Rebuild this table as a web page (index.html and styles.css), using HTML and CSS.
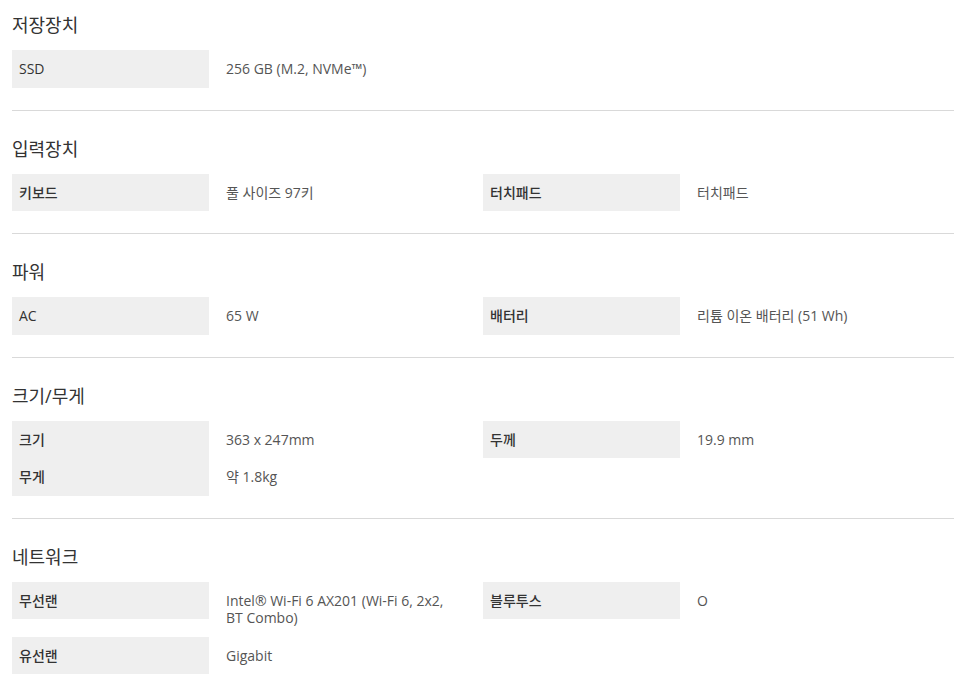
FILE: index.html
```html
<!DOCTYPE html>
<html lang="ko">
<head>
<meta charset="utf-8">
<title>사양</title>
<link rel="stylesheet" href="styles.css">
</head>
<body>
<div class="spec">
  <section class="group first">
    <h3 class="title">저장장치</h3>
    <div class="grid">
      <div class="col">
        <div class="row"><div class="label">SSD</div><div class="value">256 GB (M.2, NVMe™)</div></div>
      </div>
      <div class="col"></div>
    </div>
  </section>
  <section class="group">
    <h3 class="title">입력장치</h3>
    <div class="grid">
      <div class="col">
        <div class="row"><div class="label">키보드</div><div class="value">풀 사이즈 97키</div></div>
      </div>
      <div class="col">
        <div class="row"><div class="label">터치패드</div><div class="value">터치패드</div></div>
      </div>
    </div>
  </section>
  <section class="group">
    <h3 class="title">파워</h3>
    <div class="grid">
      <div class="col">
        <div class="row"><div class="label">AC</div><div class="value">65 W</div></div>
      </div>
      <div class="col">
        <div class="row"><div class="label">배터리</div><div class="value">리튬 이온 배터리 (51 Wh)</div></div>
      </div>
    </div>
  </section>
  <section class="group">
    <h3 class="title">크기/무게</h3>
    <div class="grid">
      <div class="col">
        <div class="row"><div class="label">크기</div><div class="value">363 x 247mm</div></div>
        <div class="row"><div class="label">무게</div><div class="value">약 1.8kg</div></div>
      </div>
      <div class="col">
        <div class="row"><div class="label">두께</div><div class="value">19.9 mm</div></div>
      </div>
    </div>
  </section>
  <section class="group">
    <h3 class="title">네트워크</h3>
    <div class="grid">
      <div class="col">
        <div class="row"><div class="label">무선랜</div><div class="value">Intel® Wi-Fi 6 AX201 (Wi-Fi 6, 2x2, BT Combo)</div></div>
        <div class="row"><div class="label">유선랜</div><div class="value">Gigabit</div></div>
      </div>
      <div class="col">
        <div class="row"><div class="label">블루투스</div><div class="value">O</div></div>
      </div>
    </div>
  </section>
</div>
</body>
</html>
```
FILE: styles.css
```css
html, body {
  margin: 0;
  padding: 0;
  background: #fff;
}
body {
  font-family: "Open Sans", "Noto Sans CJK KR", sans-serif;
  color: #333;
}
.spec {
  padding: 0 12px;
  width: 942px;
}
.group {
  padding: 23px 0 22px;
  border-bottom: 1px solid #d9d9d9;
}
.group.first {
  padding-top: 10px;
}
.title {
  margin: 0 0 10px;
  font-size: 18px;
  line-height: 30px;
  font-weight: 400;
  color: #333;
}
.grid {
  display: grid;
  grid-template-columns: 471px 471px;
}
.col {
  display: flex;
  flex-direction: column;
}
.row {
  display: flex;
  align-items: stretch;
}
.label {
  flex: 0 0 197px;
  box-sizing: border-box;
  align-self: flex-start;
  padding: 10px 7px;
  background: #efefef;
  font-size: 14px;
  line-height: 17.5px;
  height: 37.5px;
  font-weight: 500;
  color: #333;
}
.value {
  flex: 1;
  padding: 10px 20px 10px 17px;
  font-size: 14px;
  line-height: 17.5px;
  color: #555;
}
```
